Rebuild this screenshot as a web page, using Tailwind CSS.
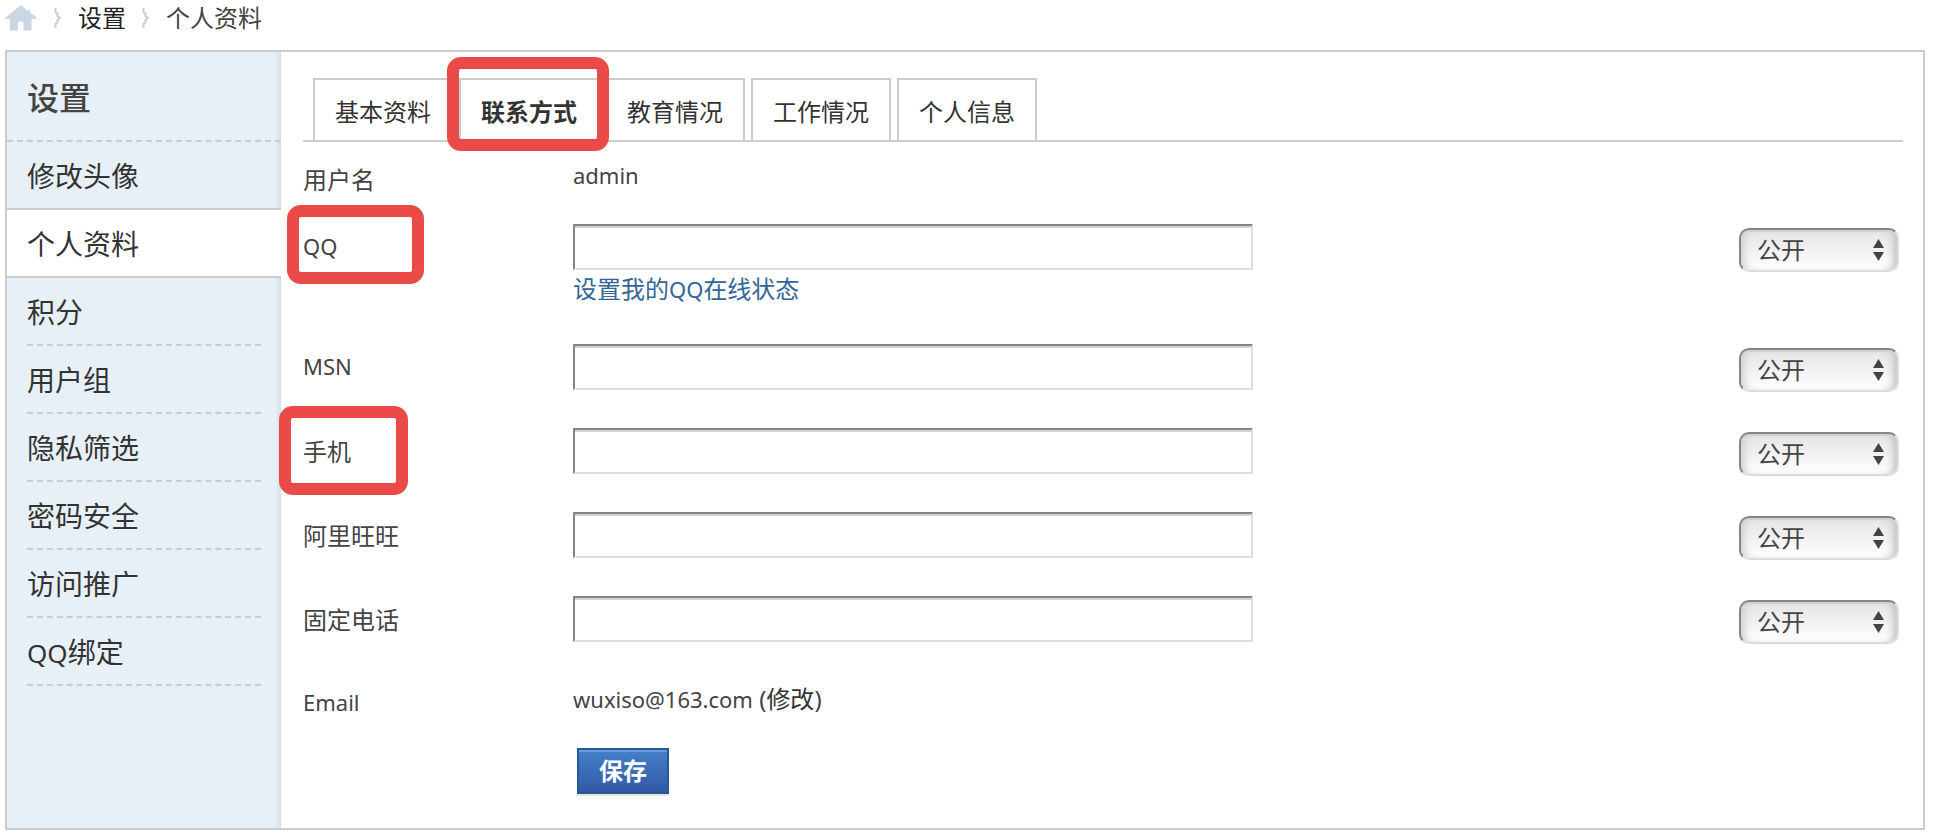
<!DOCTYPE html>
<html lang="zh-CN">
  <head>
    <meta charset="UTF-8" />
    <meta name="viewport" content="width=device-width, initial-scale=1.0" />
    <title>个人资料</title>
    <script src="https://cdn.jsdelivr.net/npm/@tailwindcss/browser@4"></script>
  </head>
  <body
    class="bg-white pl-[5px] pr-[9px] font-['Noto_Sans','Noto_Sans_CJK_SC',sans-serif] text-2xl text-[#444]"
  >
    <!-- Breadcrumb -->
    <nav class="flex items-center h-9 mb-[14px]" aria-label="面包屑">
      <a href="#" aria-label="首页">
        <svg class="w-8 h-[26px] fill-[#c8d7e3]" viewBox="0 0 32 26">
          <path d="M16 0L0 13V14H5V25.500H13V18Q13 16.500 14.500 16.500H17Q18.500 16.500 18.500 18V25.500H26.500V14H31.500V12.500L25 7.500V5H21V4.500Z" />
        </svg>
      </a>
      <svg class="w-2 h-5 ml-[17px] mr-4 fill-none stroke-[#ccc] stroke-2" viewBox="0 0 8 20">
        <path d="M1.500 0V4L3.500 6V8L6 10L3.500 12V14L1.500 16V20" />
      </svg>
      <a href="#" class="text-[#222]">设置</a>
      <svg class="w-2 h-5 mx-4 fill-none stroke-[#ccc] stroke-2" viewBox="0 0 8 20">
        <path d="M1.500 0V4L3.500 6V8L6 10L3.500 12V14L1.500 16V20" />
      </svg>
      <a href="#">个人资料</a>
    </nav>

    <div class="flex border-2 border-[#ccc] mb-[10px]">
      <!-- Sidebar -->
      <aside
        class="w-[274px] shrink-0 bg-[linear-gradient(to_left,#d3dfe8,#e8f0f7_6px)] text-[28px] leading-[64px] text-[#333]"
      >
        <h2
          class="h-[90px] pl-5 pt-1 border-b-2 border-dashed border-[#ccc] text-[32px] leading-[84px] font-medium text-[#444]"
        >
          设置
        </h2>
        <ul>
          <li class="px-5"><a href="#" class="block pt-[2px]">修改头像</a></li>
          <li class="px-5 bg-white border-y-2 border-[#ccc]">
            <a href="#" class="block pt-[2px]">个人资料</a>
          </li>
          <li class="px-5">
            <a href="#" class="block pt-[2px] border-b-2 border-dashed border-[#ccc]">积分</a>
          </li>
          <li class="px-5">
            <a href="#" class="block pt-[2px] border-b-2 border-dashed border-[#ccc]">用户组</a>
          </li>
          <li class="px-5">
            <a href="#" class="block pt-[2px] border-b-2 border-dashed border-[#ccc]">隐私筛选</a>
          </li>
          <li class="px-5">
            <a href="#" class="block pt-[2px] border-b-2 border-dashed border-[#ccc]">密码安全</a>
          </li>
          <li class="px-5">
            <a href="#" class="block pt-[2px] border-b-2 border-dashed border-[#ccc]">访问推广</a>
          </li>
          <li class="px-5">
            <a href="#" class="block h-[68px] pt-[2px] border-b-2 border-dashed border-[#ccc]"
              ><span class="text-[26px]">QQ</span>绑定</a
            >
          </li>
        </ul>
      </aside>

      <main class="flex-1 pl-[22px] pr-5 pt-[26px] pb-[22px]">
        <!-- Tabs -->
        <ul
          class="flex gap-[6px] pl-[10px] border-b-2 border-[#ccc] leading-[56px] text-[#333]"
        >
          <li class="w-[140px] border-2 border-b-0 border-[#ccc] text-center">
            <a href="#" class="block pt-1">基本资料</a>
          </li>
          <li class="relative w-[140px] border-2 border-b-0 border-[#ccc] text-center">
            <a href="#" class="block pt-1 font-bold">联系方式</a>
            <span
              class="absolute -left-[14px] -top-[23px] w-[162px] h-[94px] rounded-[14px] border-12 border-[#eb4b48] pointer-events-none z-10"
            ></span>
          </li>
          <li class="w-[140px] border-2 border-b-0 border-[#ccc] text-center">
            <a href="#" class="block pt-1">教育情况</a>
          </li>
          <li class="w-[140px] border-2 border-b-0 border-[#ccc] text-center">
            <a href="#" class="block pt-1">工作情况</a>
          </li>
          <li class="w-[140px] border-2 border-b-0 border-[#ccc] text-center">
            <a href="#" class="block pt-1">个人信息</a>
          </li>
        </ul>

        <!-- Contact form -->
        <form>
          <table class="w-full table-fixed text-left leading-[38px]">
            <colgroup>
              <col class="w-[270px]" />
              <col />
              <col class="w-[164px]" />
            </colgroup>
            <tbody class="align-top">
              <tr class="h-[70px]">
                <th class="pt-[19px] font-normal" scope="row">用户名</th>
                <td class="pt-[14px] text-[22px]">admin</td>
                <td></td>
              </tr>
              <tr class="h-[120px]">
                <th class="relative pt-[15px] font-normal" scope="row">
                  <label for="qq" class="text-[22px]">QQ</label>
                  <span
                    class="absolute -left-4 -top-[7px] w-[137px] h-[79px] rounded-[14px] border-12 border-[#eb4b48] pointer-events-none"
                  ></span>
                </th>
                <td class="pt-3">
                  <input
                    type="text"
                    id="qq"
                    name="qq"
                    class="block w-[680px] h-[46px] px-2 border-2 border-t-[#858585] border-l-[#858585] border-r-[#ddd] border-b-[#ddd] shadow-[inset_0_2px_0_#d3d3d3]"
                  />
                  <a href="#" class="block text-[#369]"
                    >设置我的<span class="text-[22px]">QQ</span>在线状态</a
                  >
                </td>
                <td class="pt-4">
                  <div class="relative w-40">
                    <select
                      name="privacy_qq"
                      aria-label="QQ 隐私"
                      class="block w-full h-11 pl-4 appearance-none rounded-[10px] border-2 border-t-[#858585] border-l-[#858585] border-r-[#ddd] border-b-[#ddd] bg-linear-to-b from-[#e4e4e4] to-white shadow-[inset_0_2px_0_#d0d0d0,inset_-8px_0_8px_-5px_#bbb,inset_8px_0_8px_-5px_#ccc]"
                    >
                      <option>公开</option>
                      <option>好友可见</option>
                      <option>保密</option>
                    </select>
                    <svg class="absolute right-[15px] top-[11px] w-[11px] h-[22px] fill-[#444] pointer-events-none" viewBox="0 0 11 22">
                      <path d="M5.500 0L11 9H0ZM0 13H11L5.500 22Z" />
                    </svg>
                  </div>
                </td>
              </tr>
              <tr class="h-[84px]">
                <th class="pt-[15px] font-normal" scope="row">
                  <label for="msn" class="text-[22px]">MSN</label>
                </th>
                <td class="pt-3">
                  <input
                    type="text"
                    id="msn"
                    name="msn"
                    class="block w-[680px] h-[46px] px-2 border-2 border-t-[#858585] border-l-[#858585] border-r-[#ddd] border-b-[#ddd] shadow-[inset_0_2px_0_#d3d3d3]"
                  />
                </td>
                <td class="pt-4">
                  <div class="relative w-40">
                    <select
                      name="privacy_msn"
                      aria-label="MSN 隐私"
                      class="block w-full h-11 pl-4 appearance-none rounded-[10px] border-2 border-t-[#858585] border-l-[#858585] border-r-[#ddd] border-b-[#ddd] bg-linear-to-b from-[#e4e4e4] to-white shadow-[inset_0_2px_0_#d0d0d0,inset_-8px_0_8px_-5px_#bbb,inset_8px_0_8px_-5px_#ccc]"
                    >
                      <option>公开</option>
                      <option>好友可见</option>
                      <option>保密</option>
                    </select>
                    <svg class="absolute right-[15px] top-[11px] w-[11px] h-[22px] fill-[#444] pointer-events-none" viewBox="0 0 11 22">
                      <path d="M5.500 0L11 9H0ZM0 13H11L5.500 22Z" />
                    </svg>
                  </div>
                </td>
              </tr>
              <tr class="h-[84px]">
                <th class="relative pt-[17px] font-normal" scope="row">
                  <label for="mobile">手机</label>
                  <span
                    class="absolute -left-6 -top-[10px] w-[129px] h-[89px] rounded-[14px] border-12 border-[#eb4b48] pointer-events-none"
                  ></span>
                </th>
                <td class="pt-3">
                  <input
                    type="text"
                    id="mobile"
                    name="mobile"
                    class="block w-[680px] h-[46px] px-2 border-2 border-t-[#858585] border-l-[#858585] border-r-[#ddd] border-b-[#ddd] shadow-[inset_0_2px_0_#d3d3d3]"
                  />
                </td>
                <td class="pt-4">
                  <div class="relative w-40">
                    <select
                      name="privacy_mobile"
                      aria-label="手机 隐私"
                      class="block w-full h-11 pl-4 appearance-none rounded-[10px] border-2 border-t-[#858585] border-l-[#858585] border-r-[#ddd] border-b-[#ddd] bg-linear-to-b from-[#e4e4e4] to-white shadow-[inset_0_2px_0_#d0d0d0,inset_-8px_0_8px_-5px_#bbb,inset_8px_0_8px_-5px_#ccc]"
                    >
                      <option>公开</option>
                      <option>好友可见</option>
                      <option>保密</option>
                    </select>
                    <svg class="absolute right-[15px] top-[11px] w-[11px] h-[22px] fill-[#444] pointer-events-none" viewBox="0 0 11 22">
                      <path d="M5.500 0L11 9H0ZM0 13H11L5.500 22Z" />
                    </svg>
                  </div>
                </td>
              </tr>
              <tr class="h-[84px]">
                <th class="pt-[17px] font-normal" scope="row">
                  <label for="taobao">阿里旺旺</label>
                </th>
                <td class="pt-3">
                  <input
                    type="text"
                    id="taobao"
                    name="taobao"
                    class="block w-[680px] h-[46px] px-2 border-2 border-t-[#858585] border-l-[#858585] border-r-[#ddd] border-b-[#ddd] shadow-[inset_0_2px_0_#d3d3d3]"
                  />
                </td>
                <td class="pt-4">
                  <div class="relative w-40">
                    <select
                      name="privacy_taobao"
                      aria-label="阿里旺旺 隐私"
                      class="block w-full h-11 pl-4 appearance-none rounded-[10px] border-2 border-t-[#858585] border-l-[#858585] border-r-[#ddd] border-b-[#ddd] bg-linear-to-b from-[#e4e4e4] to-white shadow-[inset_0_2px_0_#d0d0d0,inset_-8px_0_8px_-5px_#bbb,inset_8px_0_8px_-5px_#ccc]"
                    >
                      <option>公开</option>
                      <option>好友可见</option>
                      <option>保密</option>
                    </select>
                    <svg class="absolute right-[15px] top-[11px] w-[11px] h-[22px] fill-[#444] pointer-events-none" viewBox="0 0 11 22">
                      <path d="M5.500 0L11 9H0ZM0 13H11L5.500 22Z" />
                    </svg>
                  </div>
                </td>
              </tr>
              <tr class="h-[84px]">
                <th class="pt-[17px] font-normal" scope="row">
                  <label for="telephone">固定电话</label>
                </th>
                <td class="pt-3">
                  <input
                    type="text"
                    id="telephone"
                    name="telephone"
                    class="block w-[680px] h-[46px] px-2 border-2 border-t-[#858585] border-l-[#858585] border-r-[#ddd] border-b-[#ddd] shadow-[inset_0_2px_0_#d3d3d3]"
                  />
                </td>
                <td class="pt-4">
                  <div class="relative w-40">
                    <select
                      name="privacy_telephone"
                      aria-label="固定电话 隐私"
                      class="block w-full h-11 pl-4 appearance-none rounded-[10px] border-2 border-t-[#858585] border-l-[#858585] border-r-[#ddd] border-b-[#ddd] bg-linear-to-b from-[#e4e4e4] to-white shadow-[inset_0_2px_0_#d0d0d0,inset_-8px_0_8px_-5px_#bbb,inset_8px_0_8px_-5px_#ccc]"
                    >
                      <option>公开</option>
                      <option>好友可见</option>
                      <option>保密</option>
                    </select>
                    <svg class="absolute right-[15px] top-[11px] w-[11px] h-[22px] fill-[#444] pointer-events-none" viewBox="0 0 11 22">
                      <path d="M5.500 0L11 9H0ZM0 13H11L5.500 22Z" />
                    </svg>
                  </div>
                </td>
              </tr>
              <tr class="h-[68px]">
                <th class="pt-[15px] text-[22px] font-normal" scope="row">Email</th>
                <td class="pt-3">
                  <span class="text-[22px]">wuxiso@163.com</span> (<a href="#" class="text-[#333]">修改</a>)
                </td>
                <td></td>
              </tr>
              <tr class="h-[70px]">
                <td></td>
                <td class="pt-3 pl-1">
                  <button
                    type="submit"
                    class="block w-[92px] h-[46px] border-2 border-[#235994] bg-linear-to-b from-[#4580ca] to-[#3359a5] font-bold leading-[38px] text-white shadow-[0_2px_0_#e5e5e5,inset_0_2px_0_#6d9dd6]"
                  >
                    保存
                  </button>
                </td>
                <td></td>
              </tr>
            </tbody>
          </table>
        </form>
      </main>
    </div>
  </body>
</html>
